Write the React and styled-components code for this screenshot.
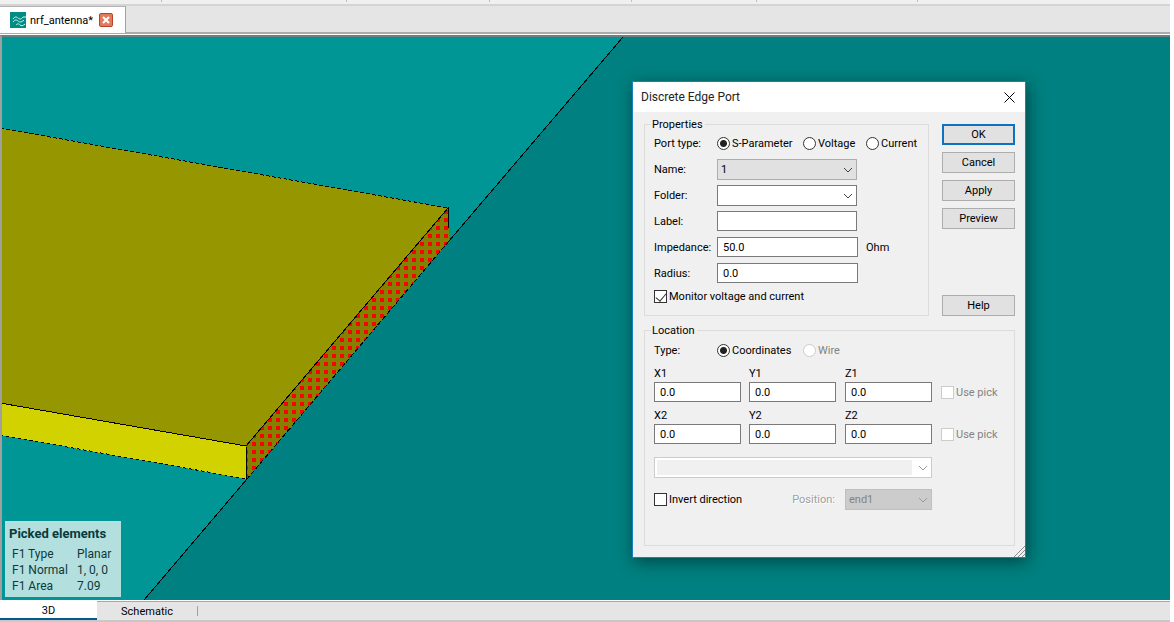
import React, { useState } from 'react';
import styled, { createGlobalStyle } from 'styled-components';

const GlobalStyle = createGlobalStyle`
    * {
        box-sizing: border-box;
    }
    body {
        margin: 0;
        background: #fff;
        color: #000;
        font-family: Roboto, 'Noto Sans', sans-serif;
        font-size: 11px;
        line-height: 15px;
    }
    button, input, select {
        margin: 0;
        font: inherit;
        color: inherit;
    }
`;

const Page = styled.div`
    display: flex;
    flex-direction: column;
    height: 100vh;
    padding-right: 4px;
`;

const ToolbarEdge = styled.div`
    display: flex;
    height: 6px;
    background: #f0f0f0;
    border-bottom: 2px solid #d4d4d4;
`;

const ToolbarGroup = styled.div`
    width: ${(props) => props.$width}px;
    height: 2px;
    border-right: 1px solid #c0c0c0;
`;

const FileTabs = styled.div`
    display: flex;
    height: 28px;
    background: #e5e5e5;
    border-bottom: 2px solid #ababab;
`;

const FileTab = styled.div`
    display: flex;
    align-items: center;
    gap: 4px;
    height: 27px;
    padding: 0 12px 0 10px;
    background: #fff;
    border-right: 1px solid #a0a0a0;
    border-top: 1px solid #b4b4b4;
`;

const CloseTab = styled.button`
    display: flex;
    align-items: center;
    justify-content: center;
    width: 14px;
    height: 14px;
    margin-left: 2px;
    padding: 0;
    background: #e27a5c;
    border: 1px solid #b8432c;
    border-radius: 2px;
`;

const Viewport = styled.main`
    position: relative;
    flex: 1;
    min-height: 0;
    margin-top: 1px;
    overflow: hidden;
    background: #008080;
    border-top: 2px solid #6c8080;
    border-left: 2px solid #a0a0a0;
`;

const Scene = styled.svg`
    display: block;
    width: 100%;
    height: 100%;
`;

const Picked = styled.section`
    position: absolute;
    left: 3px;
    bottom: 3px;
    width: 116px;
    padding: 4px 4px 3px;
    background: #b3dfdf;
    color: #0a3a3a;
    font-size: 12px;
    line-height: 16px;
`;

const PickedTitle = styled.h2`
    margin: 0 0 3px;
    font-size: 13px;
    line-height: 18px;
`;

const PickedTable = styled.table`
    border-collapse: collapse;

    th, td {
        padding: 0 0 0 3px;
        text-align: left;
        font-weight: normal;
        white-space: nowrap;
    }
    th {
        width: 65px;
    }
`;

const ViewTabs = styled.nav`
    display: flex;
    height: 22px;
    background: #e5e5e5;
    border-top: 1px solid #fff;
    border-bottom: 2px solid #c8c8c8;
`;

const ViewTab = styled.button`
    width: ${(props) => (props.$active ? 97 : 100)}px;
    padding: 0;
    border: 0;
    border-top: 1px solid ${(props) => (props.$active ? '#fff' : '#a8a8a8')};
    border-bottom: ${(props) => (props.$active ? '2px solid #005a8c' : '0')};
    background: ${(props) => (props.$active ? '#fff' : 'none')};
`;

const ViewRest = styled.div`
    flex: 1;
    padding-top: 4px;
    border-top: 1px solid #a8a8a8;

    &:before {
        content: '';
        display: block;
        width: 1px;
        height: 10px;
        background: #a0a0a0;
    }
`;

const Dialog = styled.form`
    position: absolute;
    left: 630px;
    top: 44px;
    width: 394px;
    background: #f0f0f0;
    border: 1px solid #1a7fc0;
    box-shadow: 2px 4px 16px rgba(0, 0, 0, 0.45);
`;

const TitleBar = styled.header`
    display: flex;
    align-items: center;
    justify-content: space-between;
    height: 30px;
    padding: 0 8px;
    background: #fff;
`;

const Title = styled.h1`
    margin: 0;
    color: #222;
    font-size: 12px;
    font-weight: normal;
`;

const CloseDialog = styled.button`
    display: flex;
    padding: 2px;
    border: 0;
    background: none;
`;

const DialogBody = styled.div`
    display: flex;
    flex-direction: column;
    gap: 7px;
    padding: 5px 10px 11px 11px;
`;

const TopRow = styled.div`
    display: flex;
    gap: 13px;
`;

const Group = styled.fieldset`
    flex: 1;
    min-width: 0;
    margin: 0;
    padding: 0 9px ${(props) => props.$bottom}px;
    border: 1px solid #dcdcdc;
`;

const Legend = styled.legend`
    height: 14px;
    margin-left: -3px;
    padding: 0 2px 0 1px;
`;

const Buttons = styled.div`
    display: flex;
    flex-direction: column;
    gap: 7px;
    width: 73px;
    padding: 7px 0 0;
`;

const PushButton = styled.button`
    height: 21px;
    padding: 0;
    background: #e1e1e1;
    border: ${(props) => (props.$primary ? '2px solid #0f72c0' : '1px solid #adadad')};
    margin-top: ${(props) => (props.$apart ? 59 : 0)}px;
`;

const Row = styled.div`
    display: flex;
    align-items: center;
    height: ${(props) => props.$height || 26}px;
`;

const RowLabel = styled.label`
    flex: none;
    width: 63px;
    white-space: nowrap;
`;

const Unit = styled.span`
    margin-left: 8px;
`;

const Radios = styled.div`
    display: grid;
    grid-template-columns: 86px 63px auto;
`;

const Choice = styled.label`
    display: flex;
    align-items: center;
    gap: 2px;
    color: ${(props) => (props.$dim ? '#838383' : 'inherit')};
    white-space: nowrap;
`;

const Radio = styled.input.attrs({ type: 'radio' })`
    appearance: none;
    flex: none;
    width: 13px;
    height: 13px;
    border: 1px solid #333;
    border-radius: 50%;
    background: #fff;

    &:checked {
        background: radial-gradient(circle, #222 3px, #fff 4px);
    }
    &:disabled {
        border-color: #ccc;
    }
`;

const Tick = styled.input.attrs({ type: 'checkbox' })`
    appearance: none;
    display: flex;
    justify-content: center;
    flex: none;
    width: 13px;
    height: 13px;
    border: 1px solid #333;
    background: #fff;

    &:checked:after {
        content: '';
        width: 5px;
        height: 9px;
        border: solid #333;
        border-width: 0 1px 1px 0;
        transform: rotate(40deg);
    }
    &:disabled {
        border-color: #ccc;
    }
`;

const TextBox = styled.input`
    width: ${(props) => props.$width || '87px'};
    min-width: 0;
    height: 20px;
    padding: 0 5px;
    border: 1px solid #7a7a7a;
    background: #fff;
`;

const SelectBox = styled.div`
    position: relative;
    width: ${(props) => props.$width};

    svg {
        position: absolute;
        right: 4px;
        top: 8px;
        pointer-events: none;
    }
`;

const selectLooks = {
    plain: 'background: #fff; border-color: #7a7a7a;',
    grey: 'background: #e1e1e1; border-color: #adadad;',
    locked: 'background: #ccc; border-color: #bfbfbf; color: #838383;',
    empty: `
        background: linear-gradient(#f0f0f0, #f0f0f0) 2px 2px / calc(100% - 21px) calc(100% - 4px) no-repeat #fff;
        border-color: #ccc;
    `,
};

const Select = styled.select`
    appearance: none;
    display: block;
    width: 100%;
    height: 21px;
    padding: 0 18px 0 3px;
    border: 1px solid;
    border-radius: 0;
    opacity: 1;
    ${(props) => selectLooks[props.$look]}
`;

const Points = styled.div`
    display: grid;
    grid-template-columns: 87px 88px 87px auto;
    column-gap: 8px;
    margin-top: 2px;
    padding-bottom: 3px;
`;

const Point = styled.label`
    display: flex;
    flex-direction: column;
    line-height: 17px;
`;

const PickCell = styled.div`
    display: flex;
    align-items: flex-end;
    padding: 0 0 2px 1px;
`;

const Direction = styled.div`
    display: flex;
    flex-direction: column;
    gap: 11px;
    width: 278px;
    margin-top: 10px;
`;

const DirectionRow = styled.div`
    display: flex;
    align-items: center;
    justify-content: space-between;
`;

const Position = styled.div`
    display: flex;
    align-items: center;
    gap: 10px;
`;

const PositionLabel = styled.label`
    color: #a0a0a0;
    text-shadow: 1px 1px #fff;
`;

const Grip = styled.svg`
    position: absolute;
    right: 0;
    bottom: 0;
`;

const Drop = ({ id, look = 'plain', width = '140px', disabled, label, options = [''] }) => (
    <SelectBox $width={width}>
        <Select id={id} $look={look} disabled={disabled} aria-label={label}>
            {options.map((option) => (
                <option key={option}>{option}</option>
            ))}
        </Select>
        <svg width="10" height="6" fill="none" stroke={disabled ? '#9a9a9a' : '#404040'}>
            <path d="M1 1l4 4 4-4" />
        </svg>
    </SelectBox>
);

const Plate = () => (
    <Scene aria-hidden="true">
        <defs>
            <pattern id="dots" x="4" y="2" width="8" height="8" patternUnits="userSpaceOnUse">
                <rect width="8" height="8" fill="#828200" />
                <rect width="4" height="4" fill="#f00" />
            </pattern>
        </defs>
        <g transform="translate(-2 -37)" shapeRendering="crispEdges">
            <path d="M0 37H623L144 600H0z" fill="#009696" />
            <path d="M0 128L448 208 246 446 0 403z" fill="#969600" />
            <path d="M0 403L246 446 247 479 0 435z" fill="#d2d200" />
            <path d="M448 208L449 241 247 479 246 446z" fill="url(#dots)" />
            <g fill="none" stroke="#000">
                <path d="M623 37L449 241M247 479L144 600" />
                <path d="M449 241L247 479" strokeDasharray="5 2" />
                <path d="M0 128L448 208" strokeDasharray="4 2" />
                <path d="M0 403L246 446L448 208V228M246 446L247 479" />
                <path d="M0 435L247 479" strokeDasharray="3 3" />
            </g>
        </g>
    </Scene>
);

const PointRow = ({ index }) => (
    <Points>
        {['X', 'Y', 'Z'].map((axis) => (
            <Point key={axis}>
                {axis + index}
                <TextBox defaultValue="0.0" />
            </Point>
        ))}
        <PickCell>
            <Choice $dim>
                <Tick disabled />
                Use pick
            </Choice>
        </PickCell>
    </Points>
);

const PortDialog = () => {
    const [portType, setPortType] = useState('S-Parameter');

    return (
        <Dialog onSubmit={(e) => e.preventDefault()}>
            <TitleBar>
                <Title>Discrete Edge Port</Title>
                <CloseDialog type="button" aria-label="Close">
                    <svg width="11" height="11" stroke="#000" fill="none">
                        <path d="M0.5 0.5l10 10M10.5 0.5l-10 10" />
                    </svg>
                </CloseDialog>
            </TitleBar>
            <DialogBody>
                <TopRow>
                    <Group $bottom={8}>
                        <Legend>Properties</Legend>
                        <Row $height={25}>
                            <RowLabel as="span">Port type:</RowLabel>
                            <Radios>
                                {['S-Parameter', 'Voltage', 'Current'].map((type) => (
                                    <Choice key={type}>
                                        <Radio
                                            name="port"
                                            checked={portType === type}
                                            onChange={() => setPortType(type)}
                                        />
                                        {type}
                                    </Choice>
                                ))}
                            </Radios>
                        </Row>
                        <Row>
                            <RowLabel htmlFor="name">Name:</RowLabel>
                            <Drop id="name" look="grey" options={['1']} />
                        </Row>
                        <Row>
                            <RowLabel htmlFor="folder">Folder:</RowLabel>
                            <Drop id="folder" />
                        </Row>
                        <Row>
                            <RowLabel htmlFor="label">Label:</RowLabel>
                            <TextBox id="label" $width="140px" />
                        </Row>
                        <Row>
                            <RowLabel htmlFor="impedance">Impedance:</RowLabel>
                            <TextBox id="impedance" $width="141px" defaultValue="50.0" />
                            <Unit>Ohm</Unit>
                        </Row>
                        <Row>
                            <RowLabel htmlFor="radius">Radius:</RowLabel>
                            <TextBox id="radius" $width="141px" defaultValue="0.0" />
                        </Row>
                        <Row $height={20}>
                            <Choice>
                                <Tick defaultChecked />
                                Monitor voltage and current
                            </Choice>
                        </Row>
                    </Group>
                    <Buttons>
                        <PushButton $primary>OK</PushButton>
                        <PushButton type="button">Cancel</PushButton>
                        <PushButton type="button">Apply</PushButton>
                        <PushButton type="button">Preview</PushButton>
                        <PushButton type="button" $apart>Help</PushButton>
                    </Buttons>
                </TopRow>
                <Group $bottom={35}>
                    <Legend>Location</Legend>
                    <Row>
                        <RowLabel as="span">Type:</RowLabel>
                        <Radios>
                            <Choice>
                                <Radio name="type" defaultChecked />
                                Coordinates
                            </Choice>
                            <Choice $dim>
                                <Radio name="type" disabled />
                                Wire
                            </Choice>
                        </Radios>
                    </Row>
                    <PointRow index={1} />
                    <PointRow index={2} />
                    <Direction>
                        <Drop look="empty" width="100%" disabled label="Picked point" />
                        <DirectionRow>
                            <Choice>
                                <Tick />
                                Invert direction
                            </Choice>
                            <Position>
                                <PositionLabel htmlFor="position">Position:</PositionLabel>
                                <Drop id="position" look="locked" width="87px" disabled options={['end1']} />
                            </Position>
                        </DirectionRow>
                    </Direction>
                </Group>
            </DialogBody>
            <Grip width="12" height="12" stroke="#8c8c8c" fill="none">
                <path d="M1 12L12 1M5 12l7-7M9 12l3-3" />
            </Grip>
        </Dialog>
    );
};

const picked = [
    ['F1 Type', 'Planar'],
    ['F1 Normal', '1, 0, 0'],
    ['F1 Area', '7.09'],
];

const App = () => (
    <Page>
        <GlobalStyle />
        <ToolbarEdge>
            {[162, 185, 143, 142, 125, 161].map((width) => (
                <ToolbarGroup key={width} $width={width} />
            ))}
        </ToolbarEdge>
        <FileTabs>
            <FileTab>
                <svg width="16" height="16" fill="none" stroke="#d8f4f0">
                    <rect width="16" height="16" fill="#008c82" stroke="none" />
                    <path d="M3 7c2-3 4-2 5-1s3 2 5-1l3 0M3 10c2-3 4-2 5-1s3 2 6-1M6 13c2-2 3-1 4 0s3 1 5-1" />
                </svg>
                nrf_antenna*
                <CloseTab aria-label="Close tab">
                    <svg width="8" height="8" stroke="#fff" strokeWidth="2">
                        <path d="M1 1l6 6M7 1l-6 6" />
                    </svg>
                </CloseTab>
            </FileTab>
        </FileTabs>
        <Viewport>
            <Plate />
            <Picked>
                <PickedTitle>Picked elements</PickedTitle>
                <PickedTable>
                    <tbody>
                        {picked.map(([name, value]) => (
                            <tr key={name}>
                                <th scope="row">{name}</th>
                                <td>{value}</td>
                            </tr>
                        ))}
                    </tbody>
                </PickedTable>
            </Picked>
            <PortDialog />
        </Viewport>
        <ViewTabs>
            <ViewTab $active>3D</ViewTab>
            <ViewTab>Schematic</ViewTab>
            <ViewRest />
        </ViewTabs>
    </Page>
);

export default App;
